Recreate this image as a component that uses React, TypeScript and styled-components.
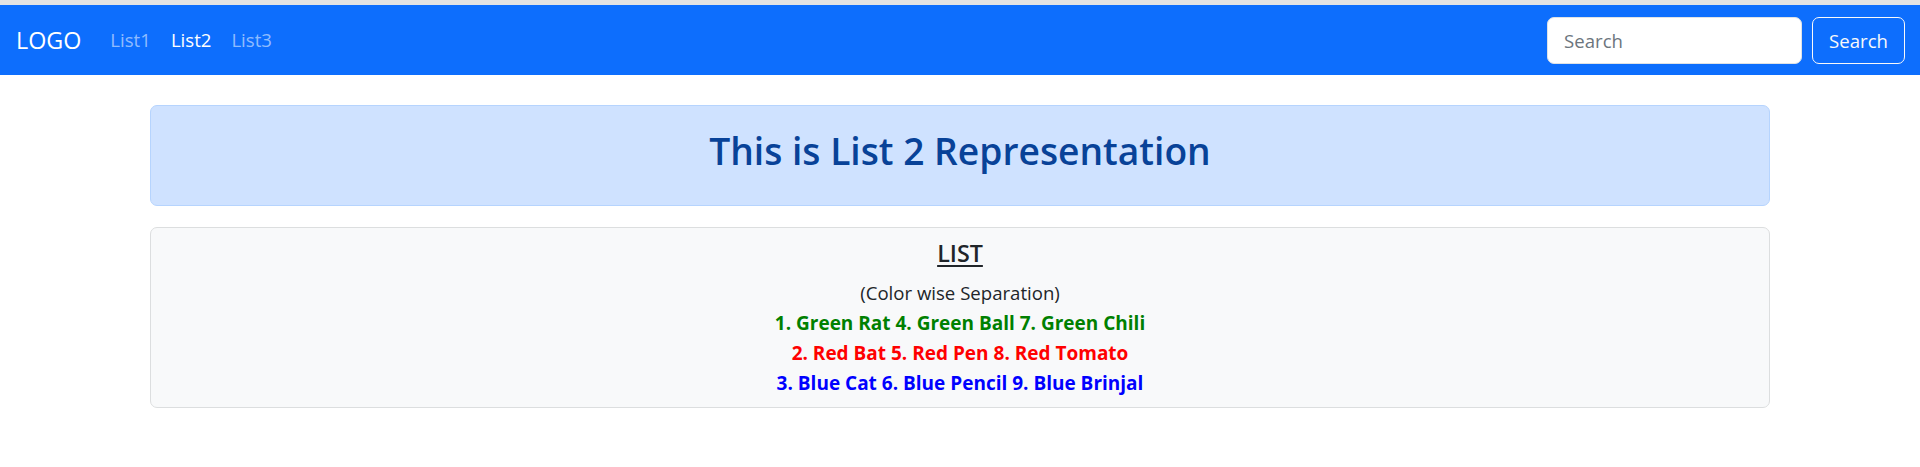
import React from "react";
import styled, { createGlobalStyle } from "styled-components";

const GlobalStyle = createGlobalStyle`
  html, body {
    margin: 0;
    padding: 0;
    background: #ffffff;
  }
  body {
    font-family: "Open Sans", "Noto Sans", sans-serif;
    font-size: 18.6px;
    line-height: 30px;
    color: #212529;
  }
  * { box-sizing: border-box; }
`;

const TopStrip = styled.div`
  height: 5px;
  background: #e3e3e3;
`;

const Navbar = styled.nav`
  height: 70px;
  background: #0d6efd;
  display: flex;
  align-items: center;
  justify-content: space-between;
  padding: 0 15px 0 16px;
`;

const Left = styled.div`
  display: flex;
  align-items: center;
`;

const Brand = styled.a`
  font-size: 23.3px;
  line-height: 38px;
  color: #ffffff;
  text-decoration: none;
  margin-right: 19px;
`;

const NavList = styled.ul`
  list-style: none;
  display: flex;
  margin: 0;
  padding: 0;
`;

const NavLink = styled.a<{ $active?: boolean }>`
  display: block;
  padding: 10px 10px;
  font-size: 18.6px;
  line-height: 30px;
  text-decoration: none;
  color: ${(p) => (p.$active ? "#ffffff" : "rgba(255,255,255,0.55)")};
`;

const SearchForm = styled.form`
  display: flex;
  align-items: center;
  gap: 10px;
`;

const SearchInput = styled.input`
  width: 255px;
  height: 47px;
  padding: 7px 16px;
  font-size: 18.6px;
  font-family: inherit;
  color: #212529;
  background: #ffffff;
  border: 1px solid #dee2e6;
  border-radius: 7px;
  outline: none;
  &::placeholder {
    color: #6c757d;
  }
`;

const SearchButton = styled.button`
  height: 47px;
  padding: 0 16px;
  font-size: 18.6px;
  font-family: inherit;
  color: #f8f9fa;
  background: transparent;
  border: 1px solid #f8f9fa;
  border-radius: 7px;
  cursor: pointer;
`;

const Container = styled.main`
  width: 1620px;
  margin: 30px auto 0;
  display: flex;
  flex-direction: column;
  gap: 21px;
`;

const Alert = styled.div`
  background: #cfe2ff;
  border: 1px solid #b6d4fe;
  border-radius: 7px;
  padding: 21px 20px 30px;
  text-align: center;
`;

const Heading = styled.h2`
  margin: 0;
  font-size: 37.2px;
  font-weight: 600;
  line-height: 48px;
  color: #084298;
`;

const Card = styled.div`
  background: #f8f9fa;
  border: 1px solid #dcdedf;
  border-radius: 7px;
  padding: 10px 20px 9px;
  text-align: center;
`;

const CardTitle = styled.h5`
  margin: 0 0 10px;
  font-size: 23.3px;
  font-weight: 600;
  line-height: 30px;
  text-decoration: underline;
  text-decoration-thickness: 2px;
  text-underline-offset: 3px;
  color: #212529;
`;

const Note = styled.p`
  margin: 0;
  font-size: 18.6px;
  line-height: 30px;
  color: #212529;
`;

const ColorLine = styled.div<{ $color: string }>`
  font-size: 19px;
  line-height: 30px;
  font-weight: 700;
  color: ${(p) => p.$color};
`;

const lines = [
  { color: "#008000", text: "1. Green Rat 4. Green Ball 7. Green Chili" },
  { color: "#ff0000", text: "2. Red Bat 5. Red Pen 8. Red Tomato" },
  { color: "#0000ff", text: "3. Blue Cat 6. Blue Pencil 9. Blue Brinjal" },
];

export default function App() {
  return (
    <>
      <GlobalStyle />
      <TopStrip />
      <Navbar>
        <Left>
          <Brand href="#">LOGO</Brand>
          <NavList>
            <li><NavLink href="#">List1</NavLink></li>
            <li><NavLink href="#" $active>List2</NavLink></li>
            <li><NavLink href="#">List3</NavLink></li>
          </NavList>
        </Left>
        <SearchForm onSubmit={(e) => e.preventDefault()}>
          <SearchInput type="search" placeholder="Search" aria-label="Search" />
          <SearchButton type="submit">Search</SearchButton>
        </SearchForm>
      </Navbar>
      <Container>
        <Alert>
          <Heading>This is List 2 Representation</Heading>
        </Alert>
        <Card>
          <CardTitle>LIST</CardTitle>
          <Note>(Color wise Separation)</Note>
          {lines.map((l) => (
            <ColorLine key={l.text} $color={l.color}>{l.text}</ColorLine>
          ))}
        </Card>
      </Container>
    </>
  );
}
